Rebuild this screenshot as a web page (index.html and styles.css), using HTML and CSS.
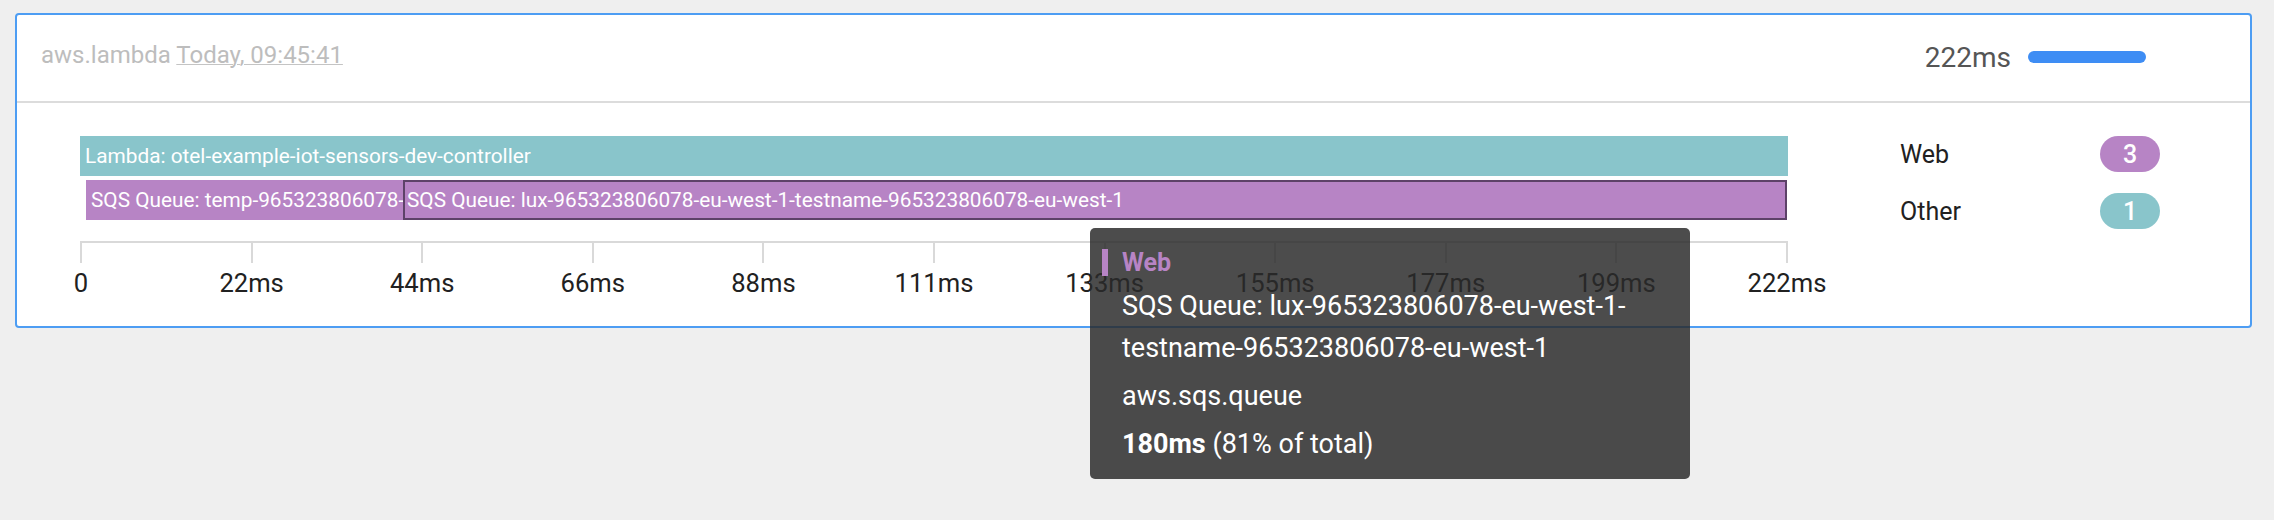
FILE: index.html
```html
<!DOCTYPE html>
<html lang="en">
<head>
<meta charset="utf-8">
<title>Trace</title>
<link rel="stylesheet" href="styles.css">
</head>
<body>
<div class="page">
  <div class="card">
    <div class="card-header">
      <div class="title">aws.lambda <span class="time">Today, 09:45:41</span></div>
      <div class="duration">
        <span class="duration-value">222ms</span>
        <span class="duration-bar"></span>
      </div>
    </div>
    <div class="card-body">
      <div class="chart">
        <div class="bar-row">
          <div class="bar bar-other" style="width:1708px">Lambda: otel-example-iot-sensors-dev-controller</div>
        </div>
        <div class="bar-row">
          <div class="bar bar-web" style="margin-left:6px;width:317px">SQS Queue: temp-965323806078-eu-west-1-testname-965323806078-eu-west-1</div>
          <div class="bar bar-web bar-selected" style="width:1384px">SQS Queue: lux-965323806078-eu-west-1-testname-965323806078-eu-west-1</div>
        </div>
        <div class="axis">
          <div class="ticks">
            <span class="tick"></span><span class="tick"></span><span class="tick"></span><span class="tick"></span><span class="tick"></span>
            <span class="tick"></span><span class="tick"></span><span class="tick"></span><span class="tick"></span><span class="tick tick-last"></span>
          </div>
          <div class="labels">
            <span class="label"><span>0</span></span>
            <span class="label"><span>22ms</span></span>
            <span class="label"><span>44ms</span></span>
            <span class="label"><span>66ms</span></span>
            <span class="label"><span>88ms</span></span>
            <span class="label"><span>111ms</span></span>
            <span class="label"><span>133ms</span></span>
            <span class="label"><span>155ms</span></span>
            <span class="label"><span>177ms</span></span>
            <span class="label"><span>199ms</span></span>
            <span class="label"><span>222ms</span></span>
          </div>
        </div>
      </div>
      <div class="legend">
        <div class="legend-item">
          <span class="legend-name">Web</span>
          <span class="badge badge-web">3</span>
        </div>
        <div class="legend-item">
          <span class="legend-name">Other</span>
          <span class="badge badge-other">1</span>
        </div>
      </div>
    </div>
  </div>
  <div class="tooltip">
    <div class="tooltip-title">Web</div>
    <p class="tooltip-line">SQS Queue: lux-965323806078-eu-west-1-testname-965323806078-eu-west-1</p>
    <p class="tooltip-line">aws.sqs.queue</p>
    <p class="tooltip-line"><strong>180ms</strong> (81% of total)</p>
  </div>
</div>
</body>
</html>
```

FILE: styles.css
```css
* { box-sizing: border-box; }

html, body {
  margin: 0;
  padding: 0;
  background: #efefef;
  font-family: Roboto, "Liberation Sans", sans-serif;
  color: #212121;
}

.page {
  position: relative;
  padding: 13px 22px 0 15px;
  min-height: 520px;
}

.card {
  background: #fff;
  border: 2px solid #4d9df3;
  border-radius: 4px;
}

.card-header {
  height: 88px;
  display: flex;
  align-items: center;
  justify-content: space-between;
  padding: 0 104px 2px 24px;
  border-bottom: 2px solid #dcdcdc;
}

.title {
  font-size: 24px;
  color: #bdbdbd;
  margin-bottom: 4px;
}

.time {
  text-decoration: underline;
  text-decoration-color: #c4c4c4;
  text-decoration-thickness: 1px;
}

.duration {
  display: flex;
  align-items: center;
  gap: 17px;
}

.duration-value {
  font-size: 28px;
  color: #555;
}

.duration-bar {
  width: 118px;
  height: 12px;
  border-radius: 6px;
  background: #3e8df4;
}

.card-body {
  display: flex;
  align-items: flex-start;
  padding: 33px 0 28px 63px;
}

.chart {
  width: 1708px;
  display: flex;
  flex-direction: column;
  gap: 4px;
}

.bar-row {
  display: flex;
  height: 40px;
}

.bar {
  height: 40px;
  flex: none;
  font-size: 20.8px;
  line-height: 40px;
  color: #fff;
  padding-left: 5px;
  white-space: nowrap;
  overflow: hidden;
}

.bar-other { background: #89c5cb; }
.bar-web { background: #b784c5; }

.bar-selected {
  border: 2px solid #5d4268;
  line-height: 36px;
  padding-left: 2px;
}

.axis {
  margin-top: 17px;
}

.ticks {
  display: flex;
  height: 22px;
  border-top: 2px solid #d9d9d9;
}

.tick {
  flex: 1;
  border-left: 2px solid #d9d9d9;
}

.tick-last {
  border-right: 2px solid #d9d9d9;
}

.labels {
  display: flex;
  justify-content: space-between;
  margin-top: 5px;
  font-size: 25.6px;
  line-height: 30px;
  color: #212121;
}

.label {
  width: 2px;
  display: flex;
  justify-content: center;
  white-space: nowrap;
}

.legend {
  margin-left: 112px;
  width: 260px;
  display: flex;
  flex-direction: column;
  gap: 21px;
}

.legend-item {
  display: flex;
  align-items: center;
  justify-content: space-between;
  height: 36px;
}

.legend-name {
  font-size: 25px;
  color: #212121;
}

.badge {
  width: 60px;
  height: 36px;
  border-radius: 18px;
  color: #fff;
  font-size: 25px;
  font-weight: 500;
  display: flex;
  align-items: center;
  justify-content: center;
}

.badge-web { background: #b784c5; }
.badge-other { background: #89c5cb; }

.tooltip {
  position: absolute;
  left: 1090px;
  top: 228px;
  width: 600px;
  height: 251px;
  background: rgba(42, 42, 42, 0.84);
  border-radius: 5px;
  padding: 21px 20px 0 12px;
  color: #fff;
  z-index: 10;
}

.tooltip-title {
  border-left: 6px solid #b784c5;
  padding-left: 14px;
  font-size: 25px;
  font-weight: 700;
  line-height: 27px;
  color: #b784c5;
}

.tooltip-line {
  margin: 6px 0 0 20px;
  font-size: 27px;
  line-height: 42px;
}

.tooltip-title + .tooltip-line {
  margin-top: 9px;
}

.tooltip-line strong {
  font-weight: 700;
}
```
